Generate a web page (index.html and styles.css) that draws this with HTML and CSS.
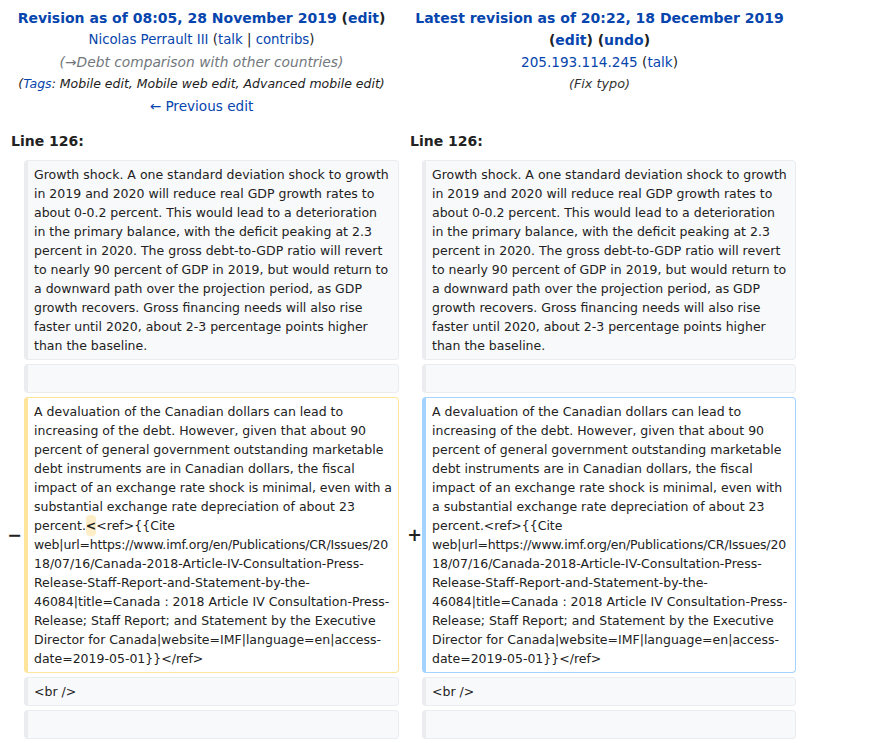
FILE: index.html
```html
<!DOCTYPE html>
<html lang="en">
<head>
<meta charset="utf-8">
<title>Difference between revisions</title>
<link rel="stylesheet" href="styles.css">
</head>
<body>
<div class="diff">
  <div class="title">
    <div class="heading"><strong><a class="link" href="#">Revision as of 08:05, 28 November 2019</a> (<a class="link" href="#">edit</a>)</strong></div>
    <div class="user"><a class="link" href="#">Nicolas Perrault III</a> (<a class="link" href="#">talk</a> | <a class="link" href="#">contribs</a>)</div>
    <div class="summary autocomment">(→Debt comparison with other countries)</div>
    <div class="summary tags">(<a class="link" href="#">Tags</a>: Mobile edit, Mobile web edit, Advanced mobile edit)</div>
    <div class="nav"><a class="link" href="#">← Previous edit</a></div>
  </div>
  <div class="title">
    <div class="heading"><strong><a class="link" href="#">Latest revision as of 20:22, 18 December 2019</a> (<a class="link" href="#">edit</a>) (<a class="link" href="#">undo</a>)</strong></div>
    <div class="nav"><a class="link" href="#">205.193.114.245</a> (<a class="link" href="#">talk</a>)</div>
    <div class="summary comment">(Fix typo)</div>
  </div>

  <div class="lineno">Line 126:</div>
  <div class="lineno">Line 126:</div>

  <div class="marker"></div>
  <div class="line context">Growth shock. A one standard deviation shock to growth<br>in 2019 and 2020 will reduce real GDP growth rates to<br>about 0-0.2 percent. This would lead to a deterioration<br>in the primary balance, with the deficit peaking at 2.3<br>percent in 2020. The gross debt-to-GDP ratio will revert<br>to nearly 90 percent of GDP in 2019, but would return to<br>a downward path over the projection period, as GDP<br>growth recovers. Gross financing needs will also rise<br>faster until 2020, about 2-3 percentage points higher<br>than the baseline.</div>
  <div class="marker right"></div>
  <div class="line context">Growth shock. A one standard deviation shock to growth<br>in 2019 and 2020 will reduce real GDP growth rates to<br>about 0-0.2 percent. This would lead to a deterioration<br>in the primary balance, with the deficit peaking at 2.3<br>percent in 2020. The gross debt-to-GDP ratio will revert<br>to nearly 90 percent of GDP in 2019, but would return to<br>a downward path over the projection period, as GDP<br>growth recovers. Gross financing needs will also rise<br>faster until 2020, about 2-3 percentage points higher<br>than the baseline.</div>

  <div class="marker"></div>
  <div class="line context">&nbsp;</div>
  <div class="marker right"></div>
  <div class="line context">&nbsp;</div>

  <div class="marker">−</div>
  <div class="line deleted">A devaluation of the Canadian dollars can lead to<br>increasing of the debt. However, given that about 90<br>percent of general government outstanding marketable<br>debt instruments are in Canadian dollars, the fiscal<br><span class="snug">impact of an exchange rate shock is minimal, even with a</span><br>substantial exchange rate depreciation of about 23<br>percent.<del class="change">&lt;</del>&lt;ref&gt;{{Cite<br><span class="tight">web|url=https://www.imf.org/en/Publications/CR/Issues/20</span><br>18/07/16/Canada-2018-Article-IV-Consultation-Press-<br>Release-Staff-Report-and-Statement-by-the-<br>46084|title=Canada : 2018 Article IV Consultation-Press-<br>Release; Staff Report; and Statement by the Executive<br>Director for Canada|website=IMF|language=en|access-<br>date=2019-05-01}}&lt;/ref&gt;</div>
  <div class="marker right">+</div>
  <div class="line added">A devaluation of the Canadian dollars can lead to<br>increasing of the debt. However, given that about 90<br>percent of general government outstanding marketable<br>debt instruments are in Canadian dollars, the fiscal<br>impact of an exchange rate shock is minimal, even with<br>a substantial exchange rate depreciation of about 23<br>percent.&lt;ref&gt;{{Cite<br><span class="tight">web|url=https://www.imf.org/en/Publications/CR/Issues/20</span><br>18/07/16/Canada-2018-Article-IV-Consultation-Press-<br>Release-Staff-Report-and-Statement-by-the-<br>46084|title=Canada : 2018 Article IV Consultation-Press-<br>Release; Staff Report; and Statement by the Executive<br>Director for Canada|website=IMF|language=en|access-<br>date=2019-05-01}}&lt;/ref&gt;</div>

  <div class="marker"></div>
  <div class="line context">&lt;br /&gt;</div>
  <div class="marker right"></div>
  <div class="line context">&lt;br /&gt;</div>

  <div class="marker"></div>
  <div class="line context">&nbsp;</div>
  <div class="marker right"></div>
  <div class="line context">&nbsp;</div>
</div>
</body>
</html>
```

FILE: styles.css
```css
html, body {
  margin: 0;
  padding: 0;
  background: #ffffff;
}

body {
  font-family: "DejaVu Sans", "Noto Sans", sans-serif;
  color: #222222;
}

.diff {
  display: grid;
  grid-template-columns: 16px 375px 15px 374px;
  column-gap: 4px;
  row-gap: 4px;
  padding: 7px 0 0 4px;
}

.title {
  grid-column: span 2;
  text-align: center;
  font-size: 13.6px;
  line-height: 22px;
}

.heading {
  font-size: 14px;
}

.user {
  font-size: 13.3px;
}

.nav {
  font-size: 13.6px;
}

.link {
  color: #0645ad;
  text-decoration: none;
}

.summary {
  font-style: italic;
}

.autocomment {
  color: #72777d;
  font-size: 13.8px;
}

.tags {
  font-size: 12.5px;
}

.comment {
  color: #333333;
  font-size: 12.8px;
}

.lineno {
  grid-column: span 2;
  font-weight: bold;
  font-size: 14px;
  line-height: 22px;
  padding: 9px 7px 4px;
}

.marker {
  align-self: center;
  text-align: right;
  font-weight: bold;
  font-size: 17.5px;
  line-height: 21px;
  margin-right: -2px;
}

.marker.right {
  margin-right: -4px;
}

.line {
  font-size: 12.5px;
  line-height: 19px;
  padding: 4px 6px;
  border: 1px solid;
  border-left-width: 4px;
  border-radius: 4px;
  white-space: nowrap;
  overflow: hidden;
}

.tight {
  letter-spacing: -0.16px;
}

.snug {
  letter-spacing: -0.07px;
}

.context {
  background: #f8f9fa;
  border-color: #eaecf0;
}

.deleted {
  background: #ffffff;
  border-color: #ffe49c;
}

.added {
  background: #ffffff;
  border-color: #a3d3ff;
}

.change {
  text-decoration: none;
  font-weight: bold;
  background: #feeec8;
  border-radius: 4px;
  padding: 3px 0;
}
```
